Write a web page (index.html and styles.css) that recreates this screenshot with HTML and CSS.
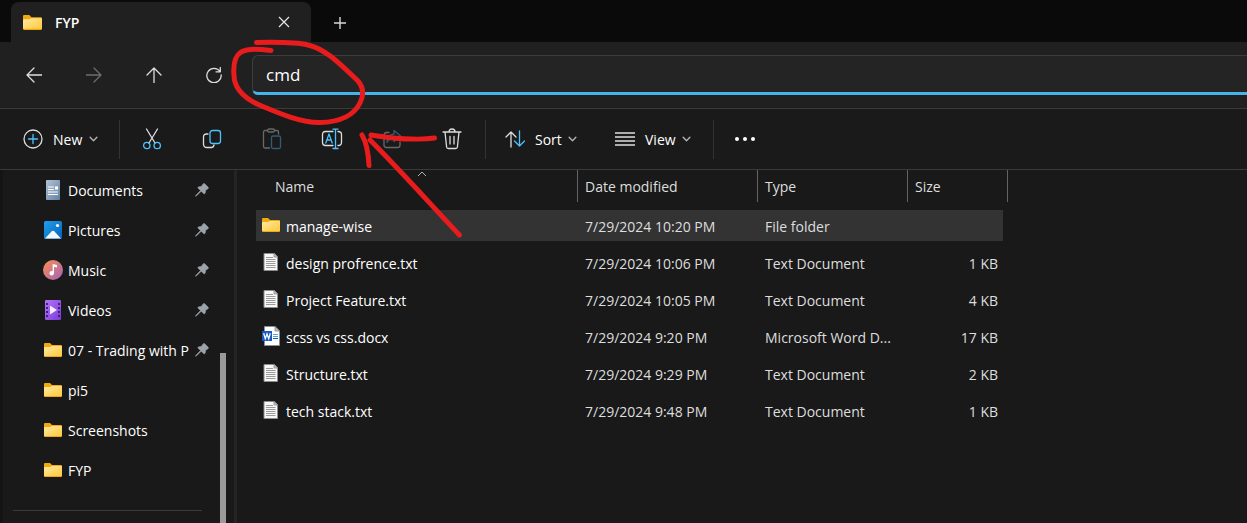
FILE: index.html
```html
<!DOCTYPE html>
<html lang="en">
<head>
<meta charset="utf-8">
<title>FYP - File Explorer</title>
<link rel="stylesheet" href="styles.css">
</head>
<body>
<svg class="defs" aria-hidden="true">
  <defs>
    <linearGradient id="g-folder" x1="0" y1="0" x2="1" y2="1"><stop offset="0" stop-color="#ffe9a3"/><stop offset="1" stop-color="#ffc93c"/></linearGradient>
    <linearGradient id="g-doc" x1="0" y1="0" x2="1" y2="1"><stop offset="0" stop-color="#b4c3d5"/><stop offset="1" stop-color="#5f82a4"/></linearGradient>
    <linearGradient id="g-pic" x1="0" y1="0" x2="1" y2="1"><stop offset="0" stop-color="#1ea0ec"/><stop offset="1" stop-color="#0662b8"/></linearGradient>
    <linearGradient id="g-music" x1="0" y1="0" x2="1" y2="1"><stop offset="0.1" stop-color="#f48a5c"/><stop offset="1" stop-color="#a362b8"/></linearGradient>
    <linearGradient id="g-video" x1="0" y1="0" x2="1" y2="1"><stop offset="0" stop-color="#b474f5"/><stop offset="1" stop-color="#7a3bdb"/></linearGradient>
  </defs>
  <symbol id="folder" viewBox="0 0 18 14">
    <path d="M0 1q0-1 1-1h5l2 2h9q1 0 1 1v10q0 1-1 1H1q-1 0-1-1z" fill="#f2a90f"/>
    <path d="M0 5q0-1 1-1h5l2-1h10v10H0z" fill="url(#g-folder)"/>
  </symbol>
  <symbol id="pin" viewBox="0 0 14 14">
    <path d="M8.2 0.8Q9 0.2 9.7 0.8L13.2 4.3Q13.8 5 13 5.7L10.8 7.1 10 10.3Q9.5 11.3 8.7 10.6L6.2 8.2 1.6 12.8 0.6 13.2 1 12.2 5.5 7.6 3 5.1Q2.4 4.4 3.4 4L6.6 3.3z" fill="#9aa3aa" stroke="#9aa3aa" stroke-width="0.6"/>
  </symbol>
  <symbol id="chevron" viewBox="0 0 8 5">
    <path d="M1 1l3 3 3-3" fill="none" stroke="#b5b5b5" stroke-width="1.2" stroke-linecap="round" stroke-linejoin="round"/>
  </symbol>
  <symbol id="txt" viewBox="0 0 15 18">
    <path d="M.5.5h10.500l3 3v14H.5z" fill="#f7f7f7" stroke="#8c8c8c"/>
    <path d="M10.500.5v3.500h3.500z" fill="#d2d2d2" stroke="#777" stroke-width=".7"/>
    <path d="M2.500 4.500h7M2.500 6.500h9.500M2.500 8.500h9.500M2.500 10.500h9.500M2.500 12.500h9.500M2.500 14.500h9.500" stroke="#9b9b9b"/>
  </symbol>
  <symbol id="word" viewBox="0 0 18 20">
    <path d="M2.500.5h10.500l4.500 4.500v14.500h-15z" fill="#fff" stroke="#8a8f96"/>
    <path d="M13 .5V5h4.500z" fill="#c7c7c7" stroke="#777" stroke-width=".7"/>
    <path d="M11 8.500h5M11 10.500h5" stroke="#41a5ee"/><path d="M11 12.500h5" stroke="#185abd"/>
    <rect y="5" width="10" height="10" fill="#185abd"/>
    <path d="M1.700 7.200l1.600 5.500L5 8l1.700 4.700 1.600-5.500" fill="none" stroke="#fff" stroke-width="1.300"/>
  </symbol>
</svg>

<header class="titlebar">
  <div class="tab">
    <svg width="19" height="15"><use href="#folder"/></svg>
    <span class="tab-title">FYP</span>
    <button class="tab-btn" aria-label="Close tab"><svg width="12" height="12" viewBox="0 0 12 12"><path d="M1 1l10 10M11 1L1 11" stroke="#e6e6e6" stroke-width="1.200"/></svg></button>
  </div>
  <button class="tab-btn new-tab" aria-label="New tab"><svg width="12" height="12" viewBox="0 0 12 12"><path d="M6 0v12M0 6h12" stroke="#d8d8d8" stroke-width="1.400"/></svg></button>
</header>

<nav class="navbar">
  <button class="icon-btn" aria-label="Back"><svg width="16" height="16" viewBox="0 0 16 16"><path d="M16 8H1M8 1L1 8l7 7" class="line"/></svg></button>
  <button class="icon-btn dim" aria-label="Forward" disabled><svg width="16" height="16" viewBox="0 0 16 16"><path d="M0 8h15M8 1l7 7-7 7" class="line"/></svg></button>
  <button class="icon-btn" aria-label="Up"><svg width="16" height="16" viewBox="0 0 16 16"><path d="M8 16V1M1 8l7-7 7 7" class="line"/></svg></button>
  <button class="icon-btn" aria-label="Refresh"><svg width="16" height="16" viewBox="0 0 16 16"><path d="M14 4.500A7.200 7.200 0 1 0 15.200 8M14.300 0.500v4.300H10" class="line"/></svg></button>
  <input class="address" type="text" value="cmd" aria-label="Address">
</nav>

<div class="toolbar">
  <button class="menu-btn new-btn"><svg width="20" height="20" viewBox="0 0 20 20"><circle cx="10" cy="10" r="9" class="line"/><path d="M10 5.500v9M5.500 10h9" class="line blue"/></svg><span>New</span><svg width="9" height="6"><use href="#chevron"/></svg></button>
  <span class="divider"></span>
  <div class="actions">
    <button class="icon-btn" aria-label="Cut"><svg width="20" height="22" viewBox="0 0 20 22"><path d="M4.500 1l8.500 14M15.500 1L7 15" class="line"/><circle cx="4.800" cy="17.500" r="3.200" class="line blue"/><circle cx="15.200" cy="17.500" r="3.200" class="line blue"/></svg></button>
    <button class="icon-btn" aria-label="Copy"><svg width="20" height="20" viewBox="0 0 20 20"><path d="M6 5H4.500Q1.500 5 1.500 8v7q0 3.500 3.500 3.500h4.500q2 0 2.500-2.500" class="line"/><rect x="8" y="1.500" width="10.500" height="13" rx="2.500" class="line blue"/></svg></button>
    <button class="icon-btn dim" aria-label="Paste" disabled><svg width="20" height="22" viewBox="0 0 20 22"><path d="M5.500 2.500H3Q1.500 2.500 1.500 4v14.500Q1.500 20 3 20h4.500M12.500 2.500H15q1.500 0 1.500 1.500v2" class="line"/><rect x="5.500" y="1" width="7" height="3" rx="1.500" class="line"/><rect x="9.500" y="8" width="9" height="12.500" rx="1.500" class="line blue"/></svg></button>
    <button class="icon-btn" aria-label="Rename"><svg width="22" height="22" viewBox="0 0 22 22"><path d="M12 3.500H4.500q-3 0-3 3v8q0 3 3 3H12M17 3.500q3.500 0 3.500 3v8q0 3-3.500 3" class="line"/><path d="M4.800 15L8 6l3.200 9M6 12h4M12 1.200h5M12 20.500h5M14.500 1.200v19.300" class="line blue"/></svg></button>
    <button class="icon-btn dim" aria-label="Share" disabled><svg width="20" height="20" viewBox="0 0 20 20"><path d="M7 3.500H4.500Q2 3.500 2 6v10q0 2.500 2.500 2.500h11Q18 18.500 18 16v-3" class="line"/><path d="M12 1.500l6.500 5.500-6.500 5.500V9Q7 9 5 13.500 5 6 12 5z" class="line blue"/></svg></button>
    <button class="icon-btn" aria-label="Delete"><svg width="20" height="22" viewBox="0 0 20 22"><path d="M1 4h18M7 4q0-3 3-3t3 3M3 4l1.600 15q.2 1.500 1.700 1.500h7.400q1.500 0 1.700-1.500L17 4M8 8.500v7.500M12 8.500v7.500" class="line"/></svg></button>
  </div>
  <span class="divider"></span>
  <button class="menu-btn sort-btn"><svg width="20" height="18" viewBox="0 0 20 18"><path d="M6 17V2M1 7l5-5 5 5" class="line"/><path d="M14.500 1v15M9.500 11l5 5 5-5" class="line blue"/></svg><span>Sort</span><svg width="9" height="6"><use href="#chevron"/></svg></button>
  <button class="menu-btn view-btn"><svg width="20" height="14" viewBox="0 0 20 14"><path d="M0 1h20M0 5h20M0 9h20M0 13h20" class="line"/></svg><span>View</span><svg width="9" height="6"><use href="#chevron"/></svg></button>
  <span class="divider"></span>
  <button class="icon-btn more" aria-label="See more"><svg width="20" height="4" viewBox="0 0 20 4"><g fill="#fff"><circle cx="2" cy="2" r="2"/><circle cx="10" cy="2" r="2"/><circle cx="18" cy="2" r="2"/></g></svg></button>
</div>

<main class="body">
  <aside class="sidebar">
    <ul class="places">
      <li><a href="#"><svg width="20" height="20" viewBox="0 0 20 20"><rect x="3" width="14" height="20" rx="1" fill="url(#g-doc)"/><path d="M5 7h6M5 9.500h6M5 12h10M5 14.500h10" stroke="#fff" stroke-width="1.200"/><rect x="12" y="6.400" width="3" height="3.200" fill="#fff"/></svg><span>Documents</span><svg class="pin" width="14" height="14"><use href="#pin"/></svg></a></li>
      <li><a href="#"><svg width="20" height="20" viewBox="0 0 20 20"><rect x="1" y="1" width="18" height="18" rx="1.500" fill="url(#g-pic)"/><path d="M2 18.500L8.500 11.500Q10 10.200 11.500 11.500L18 18.500z" fill="#f2f7fc"/><circle cx="14.500" cy="5.500" r="1.600" fill="#fff"/></svg><span>Pictures</span><svg class="pin" width="14" height="14"><use href="#pin"/></svg></a></li>
      <li><a href="#"><svg width="20" height="20" viewBox="0 0 20 20"><circle cx="10" cy="10" r="10" fill="url(#g-music)"/><circle cx="8.700" cy="13.200" r="2.200" fill="#fff"/><path d="M9.600 13V4.200h1.300L14 5v2.500l-3-.7V13z" fill="#fff"/></svg><span>Music</span><svg class="pin" width="14" height="14"><use href="#pin"/></svg></a></li>
      <li><a href="#"><svg width="20" height="20" viewBox="0 0 20 20"><rect x="2" width="16" height="20" rx="1" fill="url(#g-video)"/><path d="M4 3v15M16 3v15" stroke="#3f1f85" stroke-width="2" stroke-dasharray="2 2"/><path d="M7 5.500L14 10l-7 4.500z" fill="#f3ebff"/></svg><span>Videos</span><svg class="pin" width="14" height="14"><use href="#pin"/></svg></a></li>
      <li><a href="#"><svg width="20" height="14"><use href="#folder"/></svg><span>07 - Trading with P</span><svg class="pin" width="14" height="14"><use href="#pin"/></svg></a></li>
      <li><a href="#"><svg width="20" height="14"><use href="#folder"/></svg><span>pi5</span></a></li>
      <li><a href="#"><svg width="20" height="14"><use href="#folder"/></svg><span>Screenshots</span></a></li>
      <li><a href="#"><svg width="20" height="14"><use href="#folder"/></svg><span>FYP</span></a></li>
    </ul>
    <hr class="rule">
    <span class="scroll-thumb"></span>
  </aside>

  <section class="files">
    <table>
      <colgroup><col class="c-name"><col class="c-date"><col class="c-type"><col class="c-size"></colgroup>
      <thead>
        <tr>
          <th><div class="head">Name<svg class="sorted" width="10" height="6" viewBox="0 0 10 6"><path d="M1 5l4-4 4 4" fill="none" stroke="#b0b0b0"/></svg></div></th>
          <th><div class="head">Date modified</div></th>
          <th><div class="head">Type</div></th>
          <th><div class="head">Size</div></th>
        </tr>
      </thead>
      <tbody>
        <tr class="selected"><td><div class="file"><svg width="20" height="14"><use href="#folder"/></svg><span>manage-wise</span></div></td><td>7/29/2024 10:20 PM</td><td>File folder</td><td></td></tr>
        <tr><td><div class="file"><svg width="20" height="18"><use href="#txt"/></svg><span>design profrence.txt</span></div></td><td>7/29/2024 10:06 PM</td><td>Text Document</td><td>1 KB</td></tr>
        <tr><td><div class="file"><svg width="20" height="18"><use href="#txt"/></svg><span>Project Feature.txt</span></div></td><td>7/29/2024 10:05 PM</td><td>Text Document</td><td>4 KB</td></tr>
        <tr><td><div class="file"><svg width="20" height="20"><use href="#word"/></svg><span>scss vs css.docx</span></div></td><td>7/29/2024 9:20 PM</td><td>Microsoft Word D...</td><td>17 KB</td></tr>
        <tr><td><div class="file"><svg width="20" height="18"><use href="#txt"/></svg><span>Structure.txt</span></div></td><td>7/29/2024 9:29 PM</td><td>Text Document</td><td>2 KB</td></tr>
        <tr><td><div class="file"><svg width="20" height="18"><use href="#txt"/></svg><span>tech stack.txt</span></div></td><td>7/29/2024 9:48 PM</td><td>Text Document</td><td>1 KB</td></tr>
      </tbody>
    </table>
  </section>
</main>

<svg class="ink" width="480" height="250" viewBox="0 0 480 250" aria-hidden="true">
  <path d="M256.500 42.500C280 42 296 42 308 45C326 49 341 65 358 81C364 88 364 95 360 103C354 115 341 122 320 122.500C300 123 274 111 257 104C243 97 234 87 234 75C233 63 235 56 241 52C249 48 259 49 271 50.500"/>
  <path d="M459.500 235C432 206 402 172 370 140M362 135Q368 145 369 165.500M371 135C385 137 397 139 411 139Q425 139.500 434.500 138"/>
</svg>
</body>
</html>
```
FILE: styles.css
```css
* { box-sizing: border-box; }

body {
  margin: 0;
  min-height: 100vh;
  display: flex;
  flex-direction: column;
  position: relative;
  overflow: hidden;
  background: #191919;
  color: #fff;
  font: 14px/20px "Open Sans", "Noto Sans", sans-serif;
}

.defs { position: absolute; width: 0; height: 0; }

svg { flex: none; display: block; }

button {
  border: 0;
  padding: 0;
  background: none;
  color: inherit;
  font: inherit;
  display: flex;
  align-items: center;
}

.line {
  fill: none;
  stroke: #dedede;
  stroke-width: 1.3;
  stroke-linecap: round;
  stroke-linejoin: round;
}
.blue { stroke: #4cc2ff; }
.dim svg { opacity: 0.4; }

/* Title bar */
.titlebar {
  height: 42px;
  padding: 2px 0 0 11px;
  display: flex;
  background: #0a0a0a;
}
.tab {
  width: 300px;
  padding: 0 12px;
  display: flex;
  align-items: center;
  gap: 13px;
  border-radius: 8px 8px 0 0;
  background: #202020;
}
.tab-title { flex: 1; padding-top: 1px; font-weight: 600; }
.tab-btn { width: 30px; height: 30px; justify-content: center; }
.new-tab { margin: 6px 0 0 14px; }

/* Navigation */
.navbar {
  height: 67px;
  padding-left: 12px;
  display: flex;
  align-items: center;
  gap: 16px;
  background: #202020;
  border-bottom: 1px solid #3a3a3a;
}
.icon-btn { width: 44px; height: 40px; justify-content: center; flex: none; }
.address {
  flex: 1;
  min-width: 0;
  height: 40px;
  padding: 0 13px;
  border: 1px solid #3c3c3c;
  border-right: 0;
  border-bottom: 3px solid #48b2ea;
  border-radius: 6px 0 0 6px;
  outline: 0;
  background: #242424;
  color: #fff;
  font: 17px/24px "Open Sans", "Noto Sans", sans-serif;
}

/* Command bar */
.toolbar {
  height: 61px;
  padding-left: 12px;
  display: flex;
  align-items: center;
  background: #1a1a1a;
  border-bottom: 1px solid #3a3a3a;
}
.menu-btn { height: 40px; padding: 0 11px; gap: 10px; }
.menu-btn span { flex: 1; padding-top: 1px; text-align: left; }
.menu-btn svg:last-child { margin-left: -4px; }
.new-btn { width: 97px; margin-right: 10px; }
.sort-btn { width: 94px; margin: 0 16px 0 8px; }
.view-btn { width: 98px; margin-right: 11px; }
.more { margin-left: 9px; }
.divider { width: 1px; height: 39px; background: #333; }
.actions { display: flex; gap: 16px; margin: 0 11px 0 10px; }

/* Body */
.body { flex: 1; display: flex; min-height: 0; }

.sidebar {
  position: relative;
  width: 237px;
  flex: none;
  border-left: 3px solid #141414;
  border-right: 3px solid #242424;
  background: #191919;
}
.places { margin: 0; padding: 0; list-style: none; }
.places a {
  height: 40px;
  padding: 0 25px 0 40px;
  display: flex;
  align-items: center;
  gap: 5px;
  color: inherit;
  text-decoration: none;
}
.places span {
  flex: 1;
  min-width: 0;
  padding-top: 2px;
  white-space: nowrap;
}
.rule { margin: 20px 32px 0 10px; border: 0; border-top: 1px solid #3a3a3a; }
.scroll-thumb {
  position: absolute;
  top: 183px;
  right: 8px;
  bottom: 0;
  width: 6px;
  background: #9a9a9a;
}

/* File list */
.files { flex: 1; min-width: 0; padding-left: 19px; }
table { width: 752px; table-layout: fixed; border-collapse: separate; border-spacing: 0; }
.c-name { width: 322px; }
.c-date { width: 180px; }
.c-type { width: 150px; }
.c-size { width: 100px; }
th { height: 37px; padding: 0; vertical-align: top; text-align: left; font-weight: 400; color: #dedede; }
.head {
  position: relative;
  height: 32px;
  padding: 7px 7px 0;
  border-right: 1px solid #636363;
}
th:first-child .head { padding-left: 19px; }
.sorted { position: absolute; top: 1px; right: 150px; }
td {
  height: 37px;
  padding: 2px 7px 0;
  border: 0 solid transparent;
  border-width: 3px 0;
  background-clip: padding-box;
  color: #dedede;
  white-space: nowrap;
}
td:first-child { padding: 0 0 0 5px; color: #fff; }
td:last-child { padding-right: 5px; border-right-width: 5px; text-align: right; }
.selected td { background-color: #333; }
.file { height: 28px; display: flex; align-items: center; gap: 5px; }
.file span { padding-top: 2px; }
.file svg { margin-bottom: 1px; }

/* Red pen strokes */
.ink {
  position: absolute;
  top: 0;
  left: 0;
  pointer-events: none;
  fill: none;
  stroke: #e81c1c;
  stroke-width: 5;
  stroke-linecap: round;
  stroke-linejoin: round;
}
```
